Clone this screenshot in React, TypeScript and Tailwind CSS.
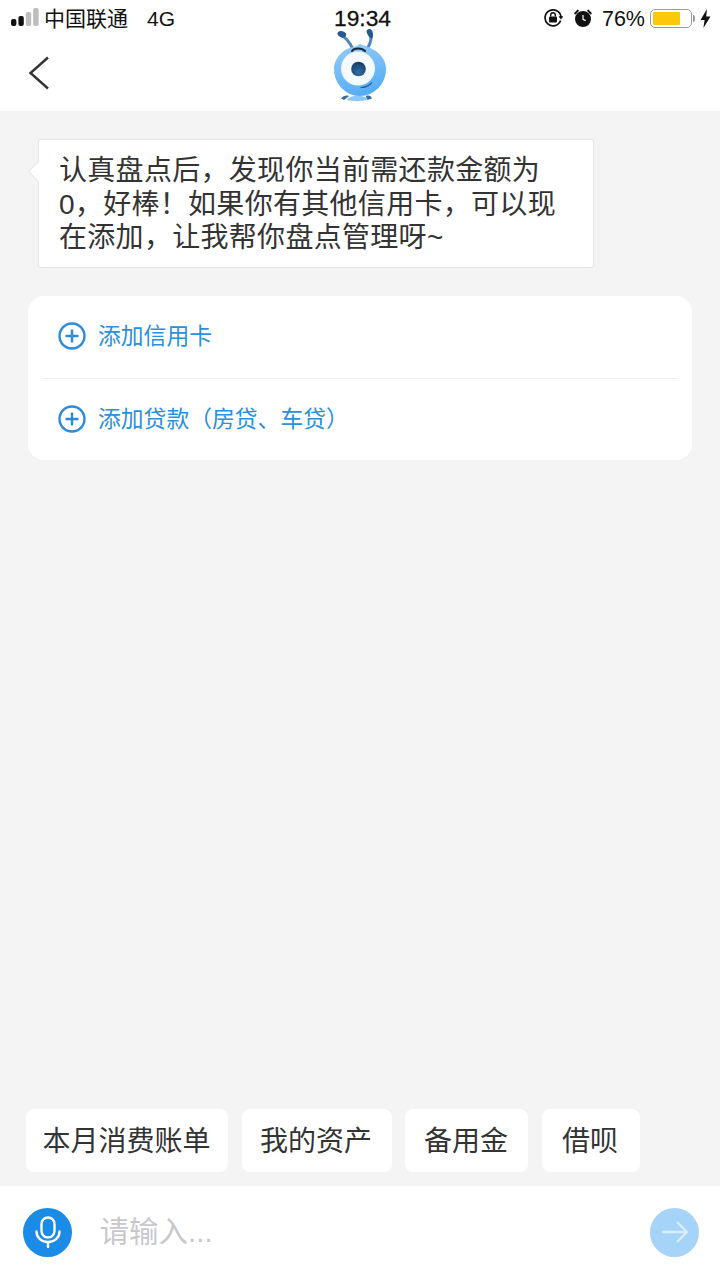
const fontStack = { fontFamily: '"Liberation Sans", "Noto Sans CJK SC", sans-serif' };

function SignalBars() {
  return (
    <svg width="28" height="20" viewBox="0 0 28 20">
      <rect x="0" y="11" width="5.4" height="7" rx="2" fill="#111" />
      <rect x="7.4" y="8" width="5.4" height="10" rx="2" fill="#111" />
      <rect x="14.8" y="4" width="5.4" height="14" rx="2" fill="#bdbdbd" />
      <rect x="22.2" y="0" width="5.4" height="18" rx="2" fill="#bdbdbd" />
    </svg>
  );
}

function RotationLock() {
  return (
    <svg width="20" height="20" viewBox="0 0 20 20" fill="none">
      <path d="M17.6 12.5A8 8 0 1 1 18 9" stroke="#111" strokeWidth="1.7" />
      <path d="M15.5 8.2h5l-2.5 3.2z" fill="#111" />
      <rect x="6" y="8.5" width="8" height="6" rx="1" fill="#111" />
      <path d="M7.7 8.5V7a2.3 2.3 0 0 1 4.6 0v1.5" stroke="#111" strokeWidth="1.4" />
    </svg>
  );
}

function AlarmClock() {
  return (
    <svg width="20" height="20" viewBox="0 0 20 20">
      <circle cx="10" cy="11" r="8" fill="#111" />
      <path d="M1 5.2 4.6 1.6 6.2 2.8 2.2 6.8zM19 5.2 15.4 1.6 13.8 2.8 17.8 6.8z" fill="#111" />
      <path d="M10 7V11.3L12.6 12.6" stroke="#fff" strokeWidth="1.2" fill="none" />
    </svg>
  );
}

function Battery() {
  return (
    <div className="flex items-center">
      <div className="w-[42px] h-[19px] rounded-[5px] border-[1.5px] border-[#9a9a9a] p-[2px]">
        <div className="h-full w-[27px] rounded-[1px] bg-[#fcc80a]" />
      </div>
      <div className="ml-[1px] w-[2px] h-[7px] rounded-r-sm bg-[#9a9a9a]" />
    </div>
  );
}

function Bolt() {
  return (
    <svg width="11" height="19" viewBox="0 0 11 19">
      <path d="M7 0 0.5 11H4.6L3.4 19 10.5 7.5H6.2z" fill="#111" />
    </svg>
  );
}

function Mascot() {
  return (
    <svg width="80" height="90" viewBox="0 0 80 90" className="absolute left-[320px] top-[20px]">
      <defs>
        <linearGradient id="mascotBody" x1="0" y1="0" x2="0.3" y2="1">
          <stop offset="0" stopColor="#96cdf8" />
          <stop offset="1" stopColor="#58aef5" />
        </linearGradient>
        <radialGradient id="mascotPupil" cx="0.5" cy="0.75" r="0.75">
          <stop offset="0" stopColor="#2f6ea6" />
          <stop offset="1" stopColor="#173a63" />
        </radialGradient>
      </defs>
      <path d="M21 15C25 17 29 21 33 29" stroke="#4d84bb" strokeWidth="3" fill="none" />
      <path d="M50 12C52 17 51 23 47 29" stroke="#4d84bb" strokeWidth="3" fill="none" />
      <path d="M17.5 13C19 10 24 10.5 26 13.5C27 16 24 18.5 21.5 17.5C19.5 16.5 17 15.5 17.5 13z" fill="#26598f" />
      <path d="M46.5 12C46.5 9 49.5 8.5 51 9.5C53 11 53.5 15 52.5 18C50.5 19 48 16 46.5 12z" fill="#26598f" />
      <path d="M24 80 L21 78.5 C23 76 26 75 29 76z" fill="#3a6b9d" />
      <path d="M46 76 C49 75 51 76 52 78.5 L47 80z" fill="#3a6b9d" />
      <path d="M27 80C31 74 45 74 48 80C41 81.5 33 81.5 27 80z" fill="#8cc8f7" />
      <path d="M40 24C44 26 47 26 50 28C60 32 66 40 66 49C66 64 54 76 40 76C26 76 14 64 14 49C14 38 24 28 34 27C36 26.5 38 25 40 24z" fill="url(#mascotBody)" />
      <circle cx="38" cy="48.5" r="17" fill="#f4f9fd" />
      <circle cx="38.5" cy="49" r="7.3" fill="url(#mascotPupil)" />
      <path d="M32 31C34 27.5 42 27.5 45 31" stroke="#17263a" strokeWidth="2" fill="none" strokeLinecap="round" />
      <path d="M41 67.5C45 67.5 48 66.5 51.5 63" stroke="#2a5c92" strokeWidth="1.2" fill="none" strokeLinecap="round" />
    </svg>
  );
}

function PlusCircle() {
  return (
    <svg width="28" height="28" viewBox="0 0 28 28" fill="none" className="shrink-0">
      <circle cx="14" cy="14" r="12.5" stroke="#2b8bd8" strokeWidth="2.4" />
      <path d="M14 7.5V20.5M7.5 14H20.5" stroke="#2b8bd8" strokeWidth="2.4" />
    </svg>
  );
}

function AddRow({ label }: { label: string }) {
  return (
    <div className="h-[81.5px] flex items-center gap-[12px] pl-[30px] pb-[1px]">
      <PlusCircle />
      <span className="text-[22.8px] text-[#2b8fdc] whitespace-nowrap">{label}</span>
    </div>
  );
}

export default function App() {
  const chips = [
    { label: '本月消费账单', width: 'w-[202px]' },
    { label: '我的资产', width: 'w-[150px]' },
    { label: '备用金', width: 'w-[123px]' },
    { label: '借呗', width: 'w-[98px]' },
  ];

  return (
    <div className="relative w-[720px] h-[1280px] flex flex-col bg-[#f4f4f4] overflow-hidden" style={fontStack}>
      {/* Cabecera */}
      <div className="h-[111px] bg-white shrink-0">
        <div className="relative h-[36px] flex items-center pl-[11px] pr-[9px] text-[#111]">
          <SignalBars />
          <span className="ml-[5px] text-[21px] leading-none">中国联通</span>
          <span className="ml-[19px] text-[21px] leading-none">4G</span>
          <span className="absolute left-[334px] top-[6px] text-[22.8px] leading-[24px] font-medium [-webkit-text-stroke:0.3px_#111]">19:34</span>
          <div className="ml-auto flex items-center">
            <RotationLock />
            <div className="ml-[10px]"><AlarmClock /></div>
            <span className="ml-[9px] mt-[3px] text-[21.5px] leading-none">76%</span>
            <div className="ml-[5px]"><Battery /></div>
            <div className="ml-[5px]"><Bolt /></div>
          </div>
        </div>
        <div className="h-[75px] flex items-center pl-[28px] pb-[2px]">
          <svg width="22" height="34" viewBox="0 0 22 34" fill="none">
            <path d="M20 1.5 2.5 17 20 32.5" stroke="#333" strokeWidth="2.4" />
          </svg>
        </div>
      </div>
      <Mascot />

      {/* Mensajes */}
      <div className="flex-1 pt-[28px]">
        <div className="relative ml-[38px] w-[556px] h-[129px] bg-white border border-[#e6e6e6] rounded-[3px] pl-[20px] pt-[14px] text-[28px] leading-[33.5px] tracking-[0.3px] text-[#333]">
          <div className="absolute -left-[8px] top-[24px] w-[15px] h-[15px] rotate-45 bg-white border-l border-b border-[#e6e6e6]" />
          <div className="relative whitespace-nowrap">
            <div>认真盘点后，发现你当前需还款金额为</div>
            <div>0，好棒！如果你有其他信用卡，可以现</div>
            <div>在添加，让我帮你盘点管理呀~</div>
          </div>
        </div>
        <div className="mx-[28px] mt-[28px] bg-white rounded-[16px]">
          <AddRow label="添加信用卡" />
          <div className="mx-[14px] h-px bg-[#efefef]" />
          <AddRow label="添加贷款（房贷、车贷）" />
        </div>
      </div>

      {/* Accesos rápidos */}
      <div className="flex gap-[13.5px] pl-[26px] pb-[14px] shrink-0">
        {chips.map((chip) => (
          <div key={chip.label} className={`${chip.width} h-[63px] pt-[2px] pr-[1px] flex items-center justify-center bg-white rounded-[8px] text-[28px] text-[#333] whitespace-nowrap`}>
            {chip.label}
          </div>
        ))}
      </div>

      {/* Barra de entrada */}
      <div className="h-[94px] bg-white flex items-center pl-[23px] pr-[21px] pb-[2px] shrink-0">
        <div className="w-[49px] h-[49px] rounded-full bg-[#1a8ce8] flex items-center justify-center">
          <svg width="26" height="32" viewBox="0 0 26 32" fill="none" stroke="#fff" strokeWidth="2.4">
            <rect x="6.5" y="1.5" width="13" height="20" rx="6.5" />
            <path d="M1.5 15.5C1.5 22 6.5 26 13 26S24.5 22 24.5 15.5M13 26V31" strokeLinecap="round" />
          </svg>
        </div>
        <span className="ml-[27.5px] text-[29.5px] text-[#c8c8cc]">请输入...</span>
        <div className="ml-auto w-[49px] h-[49px] rounded-full bg-[#a5d4f8] flex items-center justify-center">
          <svg width="28" height="22" viewBox="0 0 28 22" fill="none" stroke="#d6ecfc" strokeWidth="2.4">
            <path d="M1 11H26M16 1 26 11 16 21" />
          </svg>
        </div>
      </div>
    </div>
  );
}
